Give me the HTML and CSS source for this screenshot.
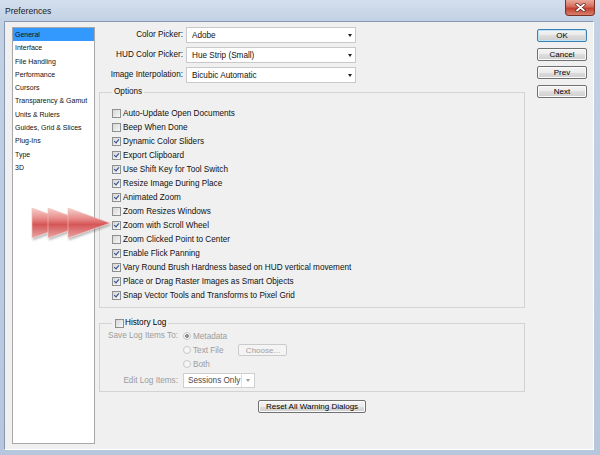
FILE: index.html
```html
<!DOCTYPE html>
<html>
<head>
<meta charset="utf-8">
<link rel="stylesheet" href="styles.css">
</head>
<body>
<div class="window">
  <div class="titlebar">
    <span class="title">Preferences</span>
    <span class="close"><svg width="11" height="9" viewBox="0 0 11 9"><path d="M2 1.5 L9 7.5 M9 1.5 L2 7.5" stroke="#5a1e18" stroke-width="3.2" stroke-linecap="round"/><path d="M2 1.5 L9 7.5 M9 1.5 L2 7.5" stroke="#ffffff" stroke-width="1.8" stroke-linecap="round"/></svg></span>
  </div>
  <div class="client">
    <ul class="nav">
      <li class="sel">General</li>
      <li>Interface</li>
      <li>File Handling</li>
      <li>Performance</li>
      <li>Cursors</li>
      <li>Transparency &amp; Gamut</li>
      <li>Units &amp; Rulers</li>
      <li>Guides, Grid &amp; Slices</li>
      <li>Plug-Ins</li>
      <li>Type</li>
      <li>3D</li>
    </ul>
    <div class="main">
      <div class="pickers">
        <label>Color Picker:</label>
        <div class="select"><span>Adobe</span><i class="caret"></i></div>
        <label>HUD Color Picker:</label>
        <div class="select"><span>Hue Strip (Small)</span><i class="caret"></i></div>
        <label>Image Interpolation:</label>
        <div class="select"><span>Bicubic Automatic</span><i class="caret"></i></div>
      </div>
      <fieldset class="group options">
        <legend>Options</legend>
        <div class="row"><span class="cb"></span>Auto-Update Open Documents</div>
        <div class="row"><span class="cb"></span>Beep When Done</div>
        <div class="row"><span class="cb on"></span>Dynamic Color Sliders</div>
        <div class="row"><span class="cb on"></span>Export Clipboard</div>
        <div class="row"><span class="cb on"></span>Use Shift Key for Tool Switch</div>
        <div class="row"><span class="cb on"></span>Resize Image During Place</div>
        <div class="row"><span class="cb on"></span>Animated Zoom</div>
        <div class="row"><span class="cb"></span>Zoom Resizes Windows</div>
        <div class="row"><span class="cb on"></span>Zoom with Scroll Wheel</div>
        <div class="row"><span class="cb"></span>Zoom Clicked Point to Center</div>
        <div class="row"><span class="cb on"></span>Enable Flick Panning</div>
        <div class="row"><span class="cb on"></span>Vary Round Brush Hardness based on HUD vertical movement</div>
        <div class="row"><span class="cb on"></span>Place or Drag Raster Images as Smart Objects</div>
        <div class="row"><span class="cb on"></span>Snap Vector Tools and Transforms to Pixel Grid</div>
      </fieldset>
      <fieldset class="group history">
        <legend><span class="cb"></span>History Log</legend>
        <div class="hgrid">
          <span class="hlabel">Save Log Items To:</span>
          <div class="radio"><span class="rb on"></span>Metadata</div>
          <span></span>
          <div class="radio"><span class="rb"></span>Text File<button class="choose">Choose...</button></div>
          <span></span>
          <div class="radio"><span class="rb"></span>Both</div>
          <span class="hlabel edit">Edit Log Items:</span>
          <div class="select small edit"><span>Sessions Only</span><span class="sep"></span><i class="caret grey"></i></div>
        </div>
      </fieldset>
      <div class="reset-row"><button class="btn reset">Reset All Warning Dialogs</button></div>
    </div>
    <div class="side">
      <button class="btn default">OK</button>
      <button class="btn">Cancel</button>
      <button class="btn">Prev</button>
      <button class="btn">Next</button>
    </div>
  </div>
  <svg class="arrows" width="86" height="42" viewBox="0 0 86 42">
    <defs>
      <linearGradient id="ag" x1="0" y1="0" x2="0" y2="1">
        <stop offset="0" stop-color="#f6d0cc"/>
        <stop offset="0.35" stop-color="#e78c8a"/>
        <stop offset="0.55" stop-color="#d65658"/>
        <stop offset="1" stop-color="#e8a4a2"/>
      </linearGradient>
      <filter id="sh" x="-20%" y="-20%" width="140%" height="160%">
        <feDropShadow dx="1" dy="2" stdDeviation="1.3" flood-color="#000" flood-opacity="0.28"/>
      </filter>
    </defs>
    <g filter="url(#sh)" stroke="#f2c2bf" stroke-width="0.6">
      <polygon points="4,5 4,35 46,20" fill="url(#ag)"/>
      <polygon points="20,5 20,35 62,20" fill="url(#ag)"/>
      <polygon points="40,5 40,35 82,20" fill="url(#ag)"/>
    </g>
  </svg>
</div>
</body>
</html>
```
FILE: styles.css
```css
body {
  margin: 0;
  font-family: "Liberation Sans", Arial, sans-serif;
}

.window {
  position: relative;
  width: 600px;
  height: 455px;
  box-sizing: border-box;
  display: flex;
  flex-direction: column;
  background: linear-gradient(#d4dfed 0, #c2d1e4 21px, #b6c7dd 100%);
}

.titlebar {
  flex: none;
  height: 21px;
  display: flex;
  justify-content: space-between;
  align-items: flex-start;
  padding-left: 5px;
}

.title {
  font-size: 8.6px;
  line-height: 22px;
  color: #1b1b1b;
}

.close {
  width: 30px;
  height: 16px;
  margin-right: 5px;
  box-sizing: border-box;
  border: 1px solid #7a3128;
  border-top: none;
  border-radius: 0 0 4px 4px;
  background: linear-gradient(#e9aa9c, #d46a58 45%, #c23f2f 55%, #d9806a);
  display: flex;
  align-items: center;
  justify-content: center;
}

.client {
  flex: 1;
  min-height: 0;
  margin: 0 6px 5px 4px;
  background: #f0f0f0;
  border: 1px solid;
  border-color: #8797af #ffffff #ffffff #8797af;
  display: flex;
}

.nav {
  list-style: none;
  margin: 5px 0 5px 7px;
  padding: 0;
  width: 83px;
  box-sizing: border-box;
  border: 1px solid #a8a8a8;
  background: #fff;
  font-size: 7px;
  color: #111;
}

.nav li {
  height: 13.3px;
  line-height: 13.3px;
  padding-left: 2px;
  white-space: nowrap;
}

.nav li.sel {
  background: #3399ff;
}

.main {
  width: 426px;
  margin-left: 4px;
  padding-top: 5px;
  display: flex;
  flex-direction: column;
  font-size: 8.2px;
  color: #111;
}

.pickers {
  display: grid;
  grid-template-columns: 84px 170px;
  column-gap: 3px;
  row-gap: 4px;
}

.pickers label {
  text-align: right;
  line-height: 16px;
  white-space: nowrap;
}

.select {
  height: 16px;
  box-sizing: border-box;
  border: 1px solid #c9c9c9;
  background: #fff;
  display: flex;
  align-items: center;
  justify-content: space-between;
  padding: 0 3px 0 5px;
}

.caret {
  width: 0;
  height: 0;
  border-left: 2.5px solid transparent;
  border-right: 2.5px solid transparent;
  border-top: 3px solid #222;
}

.caret.grey {
  border-top-color: #9a9a9a;
}

fieldset.group {
  margin: 4px 0 0;
  padding: 9px 0 5px 12px;
  border: 1px solid #d3d3d3;
  min-width: 0;
}

fieldset.group legend {
  padding: 0 2px;
  line-height: 10px;
}

.options .row {
  height: 14px;
  display: flex;
  align-items: center;
  white-space: nowrap;
}

.cb {
  flex: none;
  width: 9px;
  height: 9px;
  box-sizing: border-box;
  border: 1px solid #8e8f8f;
  background: linear-gradient(135deg, #d6d6d6, #f7f7f7);
  margin-right: 2px;
  position: relative;
}

.cb.on::after {
  content: "";
  position: absolute;
  left: 2.2px;
  top: 0.3px;
  width: 1.8px;
  height: 4.3px;
  border: solid #2a4a8c;
  border-width: 0 1.4px 1.4px 0;
  transform: rotate(40deg);
}

fieldset.history {
  margin-top: 9px;
  padding: 0 0 3px 1px;
}

fieldset.history legend {
  margin-left: 11px;
  padding: 0 2px 0 3px;
  line-height: 12px;
  display: flex;
  align-items: center;
  color: #000;
}

fieldset.history legend .cb {
  margin-right: 1px;
}

.hgrid {
  display: grid;
  grid-template-columns: 77px auto;
  column-gap: 5px;
  color: #9c9c9c;
}

.hlabel {
  text-align: right;
  line-height: 14px;
  white-space: nowrap;
}

.radio {
  height: 14px;
  display: flex;
  align-items: center;
  white-space: nowrap;
}

.rb {
  flex: none;
  width: 8px;
  height: 8px;
  box-sizing: border-box;
  border-radius: 50%;
  border: 1px solid #c8c8c8;
  background: #f6f6f6;
  margin-right: 2px;
}

.rb.on {
  background: radial-gradient(circle, #8f8f8f 0 1.6px, #f6f6f6 2.2px);
}

.choose {
  margin-left: 15px;
  width: 49px;
  height: 12px;
  padding: 0;
  box-sizing: border-box;
  font-family: inherit;
  font-size: 8px;
  color: #a0a0a0;
  background: #f4f4f4;
  border: 1px solid #cbcbcb;
  border-radius: 2px;
}

.edit {
  margin-top: 2px;
}

.hlabel.edit {
  line-height: 15px;
}

.select.small {
  width: 72px;
  height: 15px;
  padding: 0 4px 0 4px;
  color: #4a4a4a;
  border-color: #cfcfcf;
}

.select.small span:first-child {
  flex: 1;
}

.sep {
  width: 1px;
  height: 13px;
  background: #dedede;
  margin-right: 4px;
}

.reset-row {
  margin-top: 8px;
  display: flex;
  justify-content: center;
}

.btn {
  font-family: inherit;
  font-size: 8px;
  color: #000;
  height: 13px;
  padding: 0;
  box-sizing: border-box;
  border: 1px solid #707070;
  border-radius: 2px;
  background: linear-gradient(#f4f4f4 0, #ebebeb 50%, #dddddd 50%, #cfcfcf 100%);
  box-shadow: inset 0 0 0 1px #fbfbfb;
}

.btn.reset {
  width: 108px;
}

.side {
  width: 50px;
  margin-left: 12px;
  padding-top: 7px;
  display: flex;
  flex-direction: column;
  gap: 5.5px;
}

.btn.default {
  border-color: #3c7fb1;
  box-shadow: inset 0 0 0 1px #bde3f8;
}

.arrows {
  position: absolute;
  left: 28px;
  top: 203px;
}
```
